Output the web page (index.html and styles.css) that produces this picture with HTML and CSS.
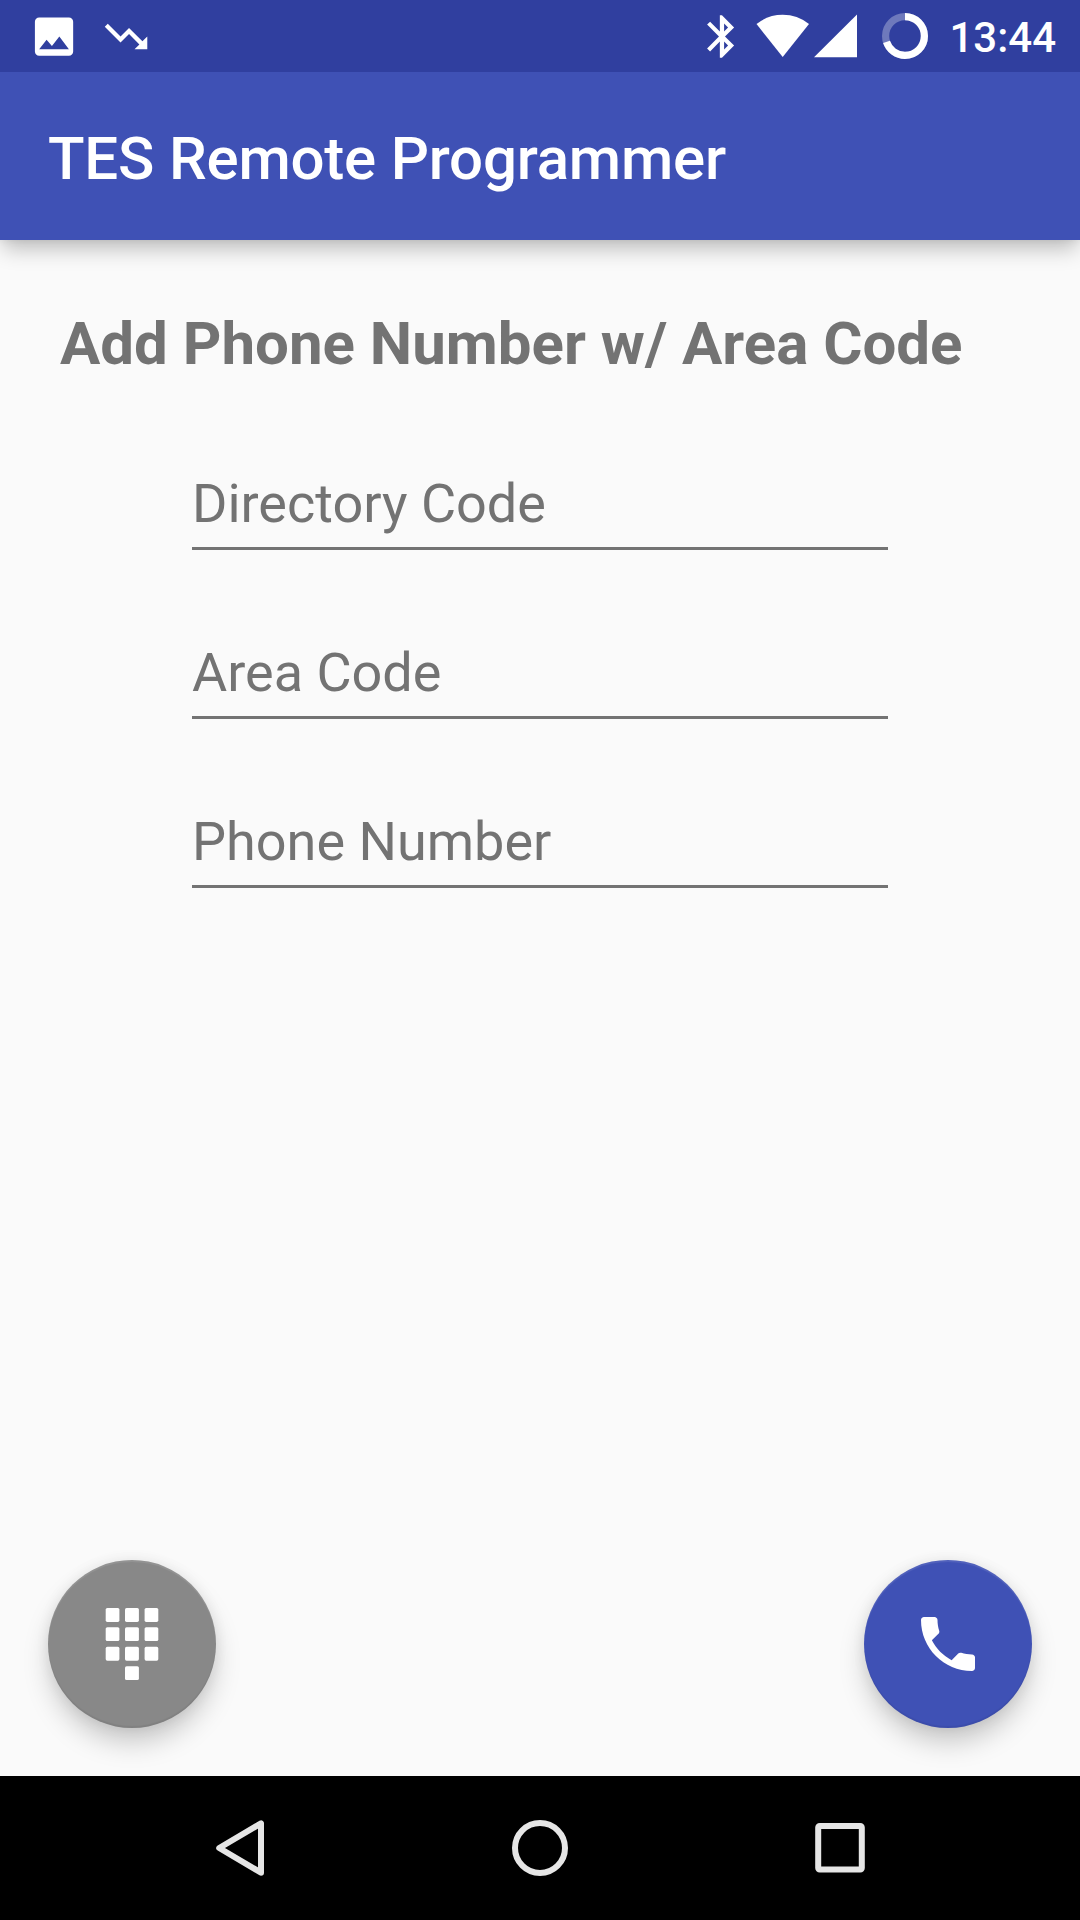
FILE: index.html
```html
<!DOCTYPE html>
<html lang="en">
<head>
<meta charset="utf-8">
<title>TES Remote Programmer</title>
<link rel="stylesheet" href="styles.css">
</head>
<body>
<div class="screen">
  <header class="status-bar">
    <div class="notifications">
      <svg class="status-icon" viewBox="-0.25 0 24 24"><path d="M21 19V5c0-1.1-.9-2-2-2H5c-1.1 0-2 .9-2 2v14c0 1.1.9 2 2 2h14c1.1 0 2-.9 2-2zM8.5 13.5l2.5 3.01L14.5 12l4.5 6H5l3.5-4.5z"/></svg>
      <svg class="status-icon" viewBox="-0.25 0 24 24"><path d="M16 18l2.29-2.29-4.88-4.88-4 4L2 7.41 3.41 6l6 6 4-4 6.3 6.29L22 12v6z"/></svg>
    </div>
    <div class="system">
      <svg class="status-icon" viewBox="0.25 0 24 24"><path d="M17.71 7.71L12 2h-1v7.59L6.41 5 5 6.41 10.59 12 5 17.59 6.41 19 11 14.41V22h1l5.71-5.71-4.3-4.29 4.3-4.29zM13 5.83l1.88 1.88L13 9.59V5.83zm1.88 10.46L13 18.17v-3.76l1.88 1.88z"/></svg>
      <svg class="wifi" viewBox="0 0 54 44"><path d="M.5 10Q12 .8 26.7 .8T53 10L26.7 43z"/></svg>
      <svg class="signal" viewBox="0 0 43 44"><path d="M0 43.2H43V.6z"/></svg>
      <svg class="battery" viewBox="0 0 46 46"><circle class="ring ring-empty" cx="23" cy="23" r="19.4"/><circle class="ring" cx="23" cy="23" r="19.4" pathLength="100" stroke-dasharray="70 30" transform="rotate(-90 23 23)"/></svg>
      <span class="clock">13:44</span>
    </div>
  </header>
  <div class="app-bar"><h1 class="app-title">TES Remote Programmer</h1></div>
  <main class="content">
    <h2 class="heading">Add Phone Number w/ Area Code</h2>
    <form class="fields">
      <div class="field">Directory Code</div>
      <div class="field">Area Code</div>
      <div class="field">Phone Number</div>
    </form>
    <div class="actions">
      <div class="fab fab-keypad">
        <svg class="fab-icon" viewBox="0 0 72 72">
          <rect x="9.7" y="0" width="13.7" height="13.9" rx="1.6"/><rect x="29" y="0" width="13.9" height="13.9" rx="1.6"/><rect x="48.6" y="0" width="13.7" height="13.9" rx="1.6"/>
          <rect x="9.7" y="19.2" width="13.7" height="13.9" rx="1.6"/><rect x="29" y="19.2" width="13.9" height="13.9" rx="1.6"/><rect x="48.6" y="19.2" width="13.7" height="13.9" rx="1.6"/>
          <rect x="9.7" y="38.8" width="13.7" height="13.9" rx="1.6"/><rect x="29" y="38.8" width="13.9" height="13.9" rx="1.6"/><rect x="48.6" y="38.8" width="13.7" height="13.9" rx="1.6"/>
          <rect x="29" y="58.2" width="13.9" height="13.8" rx="1.6"/>
        </svg>
      </div>
      <div class="fab fab-call">
        <svg class="fab-icon" viewBox="0 0 24 24"><path d="M6.62 10.79c1.44 2.83 3.76 5.14 6.59 6.59l2.2-2.2c.27-.27.67-.36 1.02-.24 1.12.37 2.33.57 3.57.57.55 0 1 .45 1 1V20c0 .55-.45 1-1 1-9.39 0-17-7.61-17-17 0-.55.45-1 1-1h3.5c.55 0 1 .45 1 1 0 1.25.2 2.45.57 3.57.11.35.03.74-.25 1.02l-2.2 2.2z"/></svg>
      </div>
    </div>
  </main>
  <nav class="nav-bar">
    <svg class="nav-icon" viewBox="0 0 60 60"><path d="M51 5.3V54.7L9.2 30z"/></svg>
    <svg class="nav-icon" viewBox="0 0 60 60"><circle cx="30" cy="30" r="25"/></svg>
    <svg class="nav-icon" viewBox="0 0 60 60"><rect x="8.2" y="8" width="43.6" height="43.6" rx="1.5"/></svg>
  </nav>
</div>
</body>
</html>
```

FILE: styles.css
```css
* { box-sizing: border-box; }

body {
  margin: 0;
  font-family: Roboto, sans-serif;
  background: #fafafa;
}

svg { display: block; flex: none; }

.screen {
  display: flex;
  flex-direction: column;
  width: 1080px;
  height: 1920px;
  overflow: hidden;
}

.status-bar {
  position: relative;
  z-index: 1;
  display: flex;
  justify-content: space-between;
  height: 72px;
  padding: 0 24px 0 28px;
  background: #303f9f;
  color: #fff;
  fill: #fff;
}

.notifications, .system { display: flex; align-items: center; }
.notifications { gap: 21px; }
.status-icon { width: 51px; height: 51px; }
.wifi { width: 54px; height: 44px; margin-left: 8px; }
.signal { width: 43px; height: 44px; margin-left: 4.5px; }
.battery { width: 46px; height: 46px; margin: 0 21px 0 25px; }
.ring { fill: none; stroke: #fff; stroke-width: 7.2; }
.ring-empty { stroke-opacity: .3; }

.clock {
  padding-top: 3px;
  font-size: 42px;
  font-weight: 500;
  line-height: 50px;
}

.app-bar {
  height: 168px;
  padding: 51px 48px 0;
  background: #3f51b5;
  box-shadow: 0 12px 20px -3px rgba(0, 0, 0, .24), 0 0 8px rgba(0, 0, 0, .08);
}

.app-title {
  margin: 0;
  color: #fff;
  font-size: 60px;
  font-weight: 500;
  letter-spacing: -.2px;
  line-height: 72px;
}

.content {
  display: flex;
  flex: 1;
  flex-direction: column;
  padding: 68px 48px 48px;
}

.heading {
  margin: 0 0 0 12px;
  color: #737373;
  font-size: 60px;
  font-weight: 700;
  line-height: 72px;
}

.fields {
  display: flex;
  flex-direction: column;
  gap: 91px;
  width: 696px;
  margin: 92px auto 0;
}

.field {
  height: 78px;
  border-bottom: 3px solid #737373;
  color: #737373;
  font-size: 54px;
  line-height: 64px;
}

.actions {
  display: flex;
  justify-content: space-between;
  margin-top: auto;
}

.fab {
  display: flex;
  align-items: center;
  justify-content: center;
  width: 168px;
  height: 168px;
  border-radius: 50%;
  fill: #fff;
  box-shadow: 0 16px 28px -3px rgba(0, 0, 0, .22), 0 0 14px rgba(0, 0, 0, .07),
    inset 0 2px 1px rgba(255, 255, 255, .1), inset 0 -2px 1px rgba(0, 0, 0, .06);
}
.fab-keypad { background: #888; }
.fab-call { background: #3f51b5; }
.fab-icon { width: 72px; height: 72px; }

.nav-bar {
  display: flex;
  align-items: center;
  justify-content: center;
  gap: 240px;
  height: 144px;
  background: #000;
}

.nav-icon {
  width: 60px;
  height: 60px;
  fill: none;
  stroke: #e6e6e6;
  stroke-width: 6;
  stroke-linejoin: round;
}
```
